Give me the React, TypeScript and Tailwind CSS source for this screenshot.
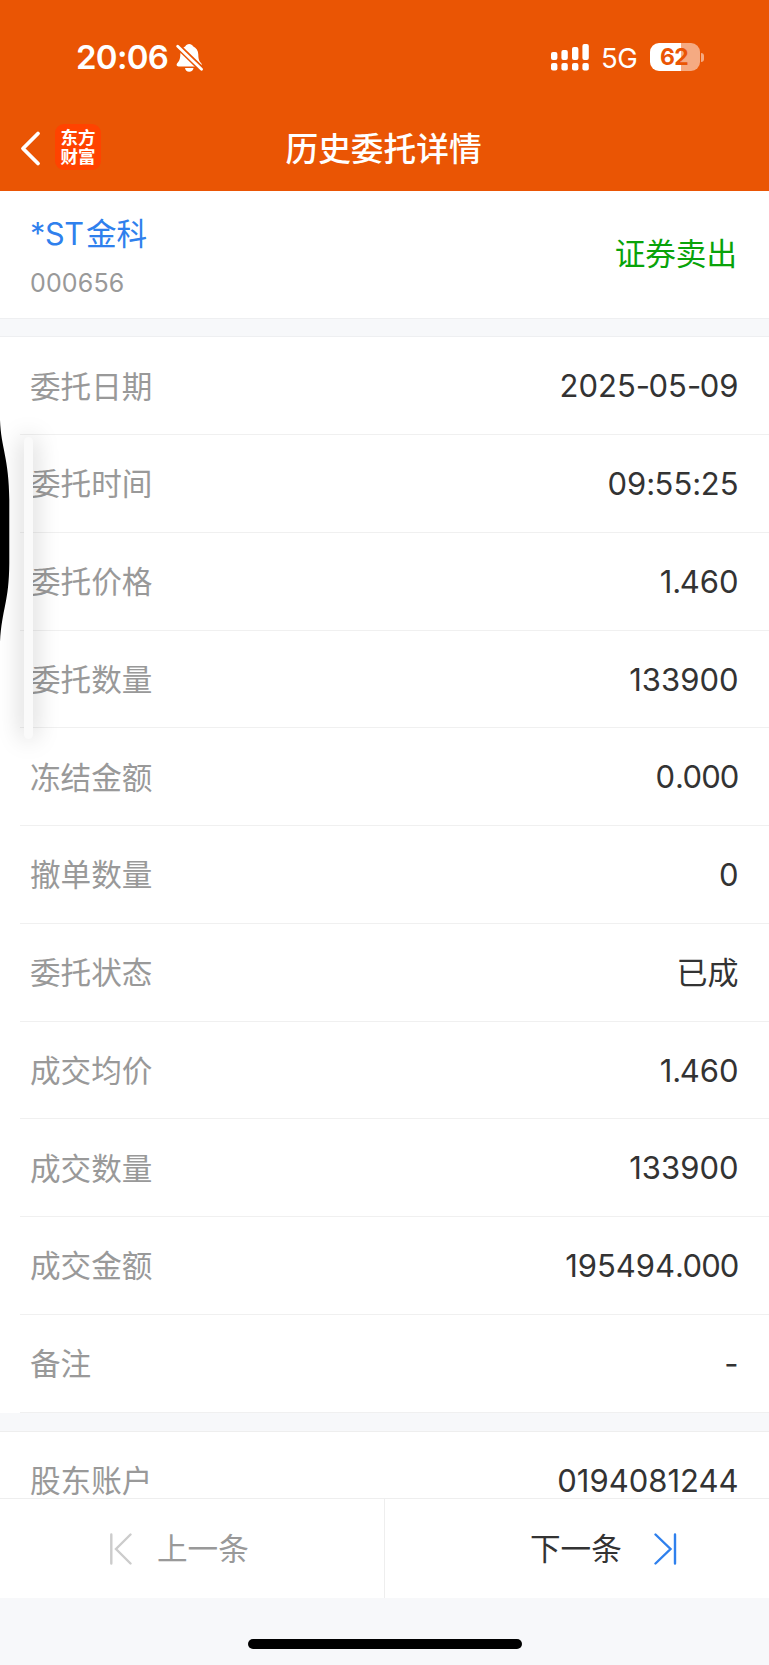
const rows: [string, string][] = [
  ["委托日期", "2025-05-09"],
  ["委托时间", "09:55:25"],
  ["委托价格", "1.460"],
  ["委托数量", "133900"],
  ["冻结金额", "0.000"],
  ["撤单数量", "0"],
  ["委托状态", "已成"],
  ["成交均价", "1.460"],
  ["成交数量", "133900"],
  ["成交金额", "195494.000"],
  ["备注", "-"],
];

function StatusBar() {
  return (
    <div className="flex h-[106px] items-start pt-[43px] pl-[76px] pr-[65px] text-white">
      <span className="mt-[-3px] w-[93px] whitespace-nowrap text-[33px] leading-[34px] font-semibold tracking-[-0.7px]">20:06</span>
      <svg className="ml-[7px]" width="28" height="30" viewBox="0 0 28 30" fill="none">
        <path d="M13.2 1C11.4 1 10.1 2 9.4 3.2 C6 4.7 4.4 7.6 4.3 11.5 C4.2 16.3 3.2 18 1.4 20 C0.2 21.2 0.4 23.4 2.6 23.4 H23.8 C26 23.4 26.2 21.2 25 20 C23.2 18 22.4 16.3 22.3 11.5 C22.2 7.6 20.4 4.7 17 3.2 C16.3 2 15 1 13.2 1Z" fill="#fff" />
        <path d="M9 25H17.5C17.2 27.4 15.6 28.7 13.2 28.7S9.3 27.4 9 25Z" fill="#fff" />
        <path d="M1 2.4L26 26.6" stroke="#ea5504" strokeWidth="6" />
        <path d="M1.7 3.3L25.5 26.3" stroke="#fff" strokeWidth="2.8" strokeLinecap="round" />
      </svg>
      <svg className="ml-auto" width="38" height="29" viewBox="0 0 38 29" fill="#fff">
        <rect x="0" y="9" width="6.4" height="8" rx="2" />
        <rect x="10.4" y="7" width="6.4" height="10" rx="2" />
        <rect x="21" y="4" width="6.4" height="13" rx="2" />
        <rect x="31.4" y="1" width="6.4" height="16" rx="2" />
        <rect x="0" y="20" width="6.4" height="7.5" rx="2" />
        <rect x="10.4" y="20" width="6.4" height="7.5" rx="2" />
        <rect x="21" y="20" width="6.4" height="7.5" rx="2" />
        <rect x="31.4" y="20" width="6.4" height="7.5" rx="2" />
      </svg>
      <span className="ml-[12px] w-[38px] whitespace-nowrap text-[27.5px] leading-[31px] tracking-[-0.5px]">5G</span>
      <div className="ml-[11px] flex h-[28px] w-[50px] items-center justify-center rounded-[9px] bg-[linear-gradient(to_right,#fff_62%,#f5aa82_62%)] pr-[2px] text-[23px] font-bold tracking-[-0.6px] text-[#ea5504]">
        62
      </div>
      <div className="mt-[10px] ml-[1px] h-[9px] w-[3px] rounded-r-full bg-[#f5aa82]" />
    </div>
  );
}

function NavBar() {
  return (
    <div className="flex h-[85px] items-start">
      <svg className="mt-[23.5px] ml-[20px]" width="22" height="38" viewBox="0 0 22 38" fill="none" stroke="#fff" strokeWidth="3.8" strokeLinecap="round" strokeLinejoin="round">
        <path d="M18 3.5L3 18.5L18 33.5" />
      </svg>
      <div className="mt-[18px] ml-[13px] flex h-[46px] w-[46px] flex-col items-center justify-center rounded-[9px] bg-[#ff4300] text-[17.5px] leading-[19px] font-bold text-white">
        <span>东方</span>
        <span>财富</span>
      </div>
      <h1 className="mt-[21px] ml-[184.5px] whitespace-nowrap text-[32.7px] leading-[44px] font-medium text-white">历史委托详情</h1>
    </div>
  );
}

const tracking: Record<string, string> = {
  ":": "tracking-[-0.5px]",
  "-": "tracking-[-1.5px]",
  ".": "tracking-[-1.5px]",
  "000": "tracking-[-0.9px]",
};

function Value({ text }: { text: string }) {
  if (text.length < 2) return <>{text}</>;
  return (
    <>
      {text.split(/([-.:])/).map((part, i) => (
        <span key={i} className={tracking[part] ?? ""}>
          {part}
        </span>
      ))}
    </>
  );
}

function Row({ label, value }: { label: string; value: string }) {
  return (
    <div className="flex h-[97.75px] shrink-0 flex-col pl-[20px]">
      <div className="flex flex-1 items-center justify-between pt-[2px] pr-[30.5px] pl-[10px]">
        <span className="text-[30.6px] text-[#999999]">{label}</span>
        <span className="text-[31px] text-[#333333]">
          <Value text={value} />
        </span>
      </div>
      <div className="h-px bg-[#f0f0f0]" />
    </div>
  );
}

export default function App() {
  return (
    <div className="relative flex h-[1665px] w-[769px] flex-col overflow-hidden bg-[#f7f8fa] font-[Inter,'Noto_Sans_CJK_SC',sans-serif]">
      <header className="h-[191px] shrink-0 bg-[#ea5504]">
        <StatusBar />
        <NavBar />
      </header>

      <section className="flex h-[127px] shrink-0 items-center justify-between bg-white pr-[32px] pl-[30px]">
        <div className="flex flex-col pt-[4px]">
          <span className="text-[30.6px] leading-[44px] text-[#2f80ed]">
            <span className="mr-[2.5px] tracking-[-0.4px]">*ST</span>金科
          </span>
          <span className="mt-[9px] text-[25px] leading-[36px] tracking-[0.15px] text-[#999999]">000656</span>
        </div>
        <span className="pb-[2px] text-[30.6px] text-[#09a309]">证券卖出</span>
      </section>

      <div className="h-[19.25px] shrink-0 border-y border-[#eeeff1]" />

      <section className="flex h-[1075.25px] shrink-0 flex-col bg-white">
        {rows.map(([label, value]) => (
          <Row key={label} label={label} value={value} />
        ))}
      </section>

      <div className="h-[19px] shrink-0 border-b border-[#eeeeee]" />

      <section className="h-[66.5px] shrink-0 overflow-hidden bg-white">
        <Row label="股东账户" value="0194081244" />
      </section>

      <nav className="flex h-[100px] shrink-0 border-t border-[#eeeeee] bg-white">
        <div className="flex w-[385px] items-center border-r border-[#eeeeee] pl-[109px]">
          <svg width="24" height="32" viewBox="0 0 24 32" fill="none" stroke="#cccccc" strokeWidth="2.4" strokeLinecap="round">
            <path d="M2.3 1.5V30.5M21.5 1.5L7 16L21.5 30.5" />
          </svg>
          <span className="ml-[24px] pt-[1px] text-[30.6px] text-[#999999]">上一条</span>
        </div>
        <div className="flex flex-1 items-center pl-[145px]">
          <span className="pt-[1px] text-[30.6px] text-[#333333]">下一条</span>
          <svg className="ml-[31px]" width="24" height="32" viewBox="0 0 24 32" fill="none" stroke="#2f80ed" strokeWidth="2.4" strokeLinecap="round">
            <path d="M22 1.5V30.5M2.5 1.5L17.5 16L2.5 30.5" />
          </svg>
        </div>
      </nav>

      <div className="flex flex-1 items-start justify-center pt-[41px]">
        <div className="h-[10px] w-[274px] rounded-full bg-black" />
      </div>

      <div className="absolute top-[437px] left-[24px] h-[302px] w-[9px] rounded-full bg-[#fafafa] shadow-[0_0_24px_rgba(0,0,0,0.28)]" />
      <svg className="absolute top-[418px] left-0" width="12" height="226" viewBox="0 0 12 226">
        <path d="M0 2C1 30 9 40 9.3 82V145C9 185 2 190 0 224Z" fill="#000" />
      </svg>
    </div>
  );
}
